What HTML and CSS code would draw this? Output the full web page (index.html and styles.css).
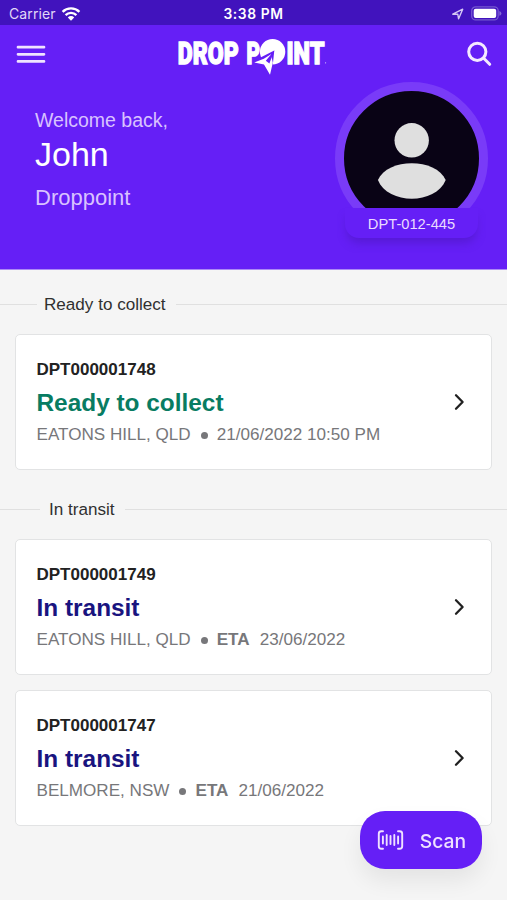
FILE: index.html
```html
<!DOCTYPE html>
<html lang="en">
<head>
<meta charset="utf-8">
<meta name="viewport" content="width=device-width, initial-scale=1">
<title>Drop Point</title>
<link rel="stylesheet" href="styles.css">
</head>
<body>
<div class="status">
  <div class="carrier"><span>Carrier</span>
    <svg width="20" height="16" viewBox="0 0 20 16"><g fill="none" stroke="#fff" stroke-width="2.4"><path d="M1.6 5.8a12 12 0 0 1 16.8 0M4.6 9.1a7.7 7.7 0 0 1 10.8 0"/></g><path fill="#fff" d="M6.8 11.4a4.6 4.6 0 0 1 6.4 0L10 14.7z"/></svg>
  </div>
  <span class="clock">3:38 PM</span>
  <div class="power">
    <svg width="12" height="12" viewBox="0 0 12 12"><path d="M.8 6.2 10.7 1.2 6.6 10.8 5.8 6.3z" fill="none" stroke="#d5c8f5" stroke-width="1.4" stroke-linejoin="round"/></svg>
    <svg width="31" height="15" viewBox="0 0 31 15"><rect x=".7" y=".9" width="26.5" height="13" rx="4" fill="none" stroke="#7558d0" stroke-width="1.3"/><rect x="2.7" y="2.8" width="22.5" height="9.2" rx="2" fill="#fff"/><path d="M28.4 5v4.8q2-.7 2-2.4T28.4 5" fill="#8367d8"/></svg>
  </div>
</div>
<header class="hero">
  <nav class="nav">
    <svg class="menu" width="30" height="20" viewBox="0 0 30 20"><path d="M2 2.2h26M2 9.3h26M2 16.4h26" stroke="#efe3ff" stroke-width="2.7" stroke-linecap="round"/></svg>
    <svg class="logo" width="150" height="56" viewBox="0 -12 150 56" role="img" aria-label="Drop Point">
      <g class="wordmark">
        <text x="0.8" y="24.5" textLength="61" lengthAdjust="spacingAndGlyphs">DROP</text>
        <text x="69.5" y="24.5" textLength="13.5" lengthAdjust="spacingAndGlyphs">P</text>
        <text x="109.5" y="24.5" textLength="38" lengthAdjust="spacingAndGlyphs">INT</text>
      </g>
      <circle cx="95.6" cy="12.8" r="12.7" fill="#fff"/>
      <path d="M97.3 11.5 82.5 19l-4 3 14.3 8 3-4.5z" fill="#651ff6"/>
      <path d="M94 15.2 86.8 19.8l-9.6 3.8 9.8 1.9 6 10.3 2.8-12.1z" fill="#fff"/>
      <path d="M97.3 11.5 88.8 21.8l3.6 2.6z" fill="#651ff6"/>
      <circle cx="148.6" cy="23.8" r=".6" fill="#d7c3ff"/>
    </svg>
    <svg width="28" height="28" viewBox="0 0 28 28"><g fill="none" stroke="#f4eaff" stroke-width="3" stroke-linecap="round"><circle cx="12.3" cy="11.8" r="8.6"/><path d="m18.7 18.3 6 6"/></g></svg>
  </nav>
  <div class="intro">
    <div class="greeting">
      <p class="welcome">Welcome back,</p>
      <p class="name">John</p>
      <p class="org">Droppoint</p>
    </div>
    <div class="profile">
      <div class="avatar">
        <svg width="135" height="134" viewBox="0 0 135 134"><circle cx="67.7" cy="49.3" r="17.2" fill="#dfdfdf"/><path d="M33.9 89C43.5 66.5 92 66.5 101.7 89 91.5 114 44 114 33.9 89z" fill="#dfdfdf"/></svg>
      </div>
      <span class="member">DPT-012-445</span>
    </div>
  </div>
</header>
<main>
  <h2 class="divider"><span>Ready to collect</span></h2>
  <article class="card">
    <div>
      <p class="id">DPT000001748</p>
      <p class="state ready">Ready to collect</p>
      <p class="meta"><span class="place">EATONS HILL, QLD</span><i class="dot"></i><span>21/06/2022 10:50 PM</span></p>
    </div>
    <svg width="12" height="18" viewBox="0 0 12 18"><path d="m3 2.3 6.6 6.7L3 15.7" class="chevron"/></svg>
  </article>
  <h2 class="divider transit-divider"><span>In transit</span></h2>
  <article class="card">
    <div>
      <p class="id">DPT000001749</p>
      <p class="state transit">In transit</p>
      <p class="meta"><span class="place">EATONS HILL, QLD</span><i class="dot"></i><b>ETA</b><span>23/06/2022</span></p>
    </div>
    <svg width="12" height="18" viewBox="0 0 12 18"><path d="m3 2.3 6.6 6.7L3 15.7" class="chevron"/></svg>
  </article>
  <article class="card">
    <div>
      <p class="id">DPT000001747</p>
      <p class="state transit">In transit</p>
      <p class="meta"><span class="place">BELMORE, NSW</span><i class="dot"></i><b>ETA</b><span>21/06/2022</span></p>
    </div>
    <svg width="12" height="18" viewBox="0 0 12 18"><path d="m3 2.3 6.6 6.7L3 15.7" class="chevron"/></svg>
  </article>
</main>
<button class="scan">
  <svg width="28" height="22" viewBox="0 0 28 22"><g fill="none" stroke="#efe1ff" stroke-width="1.9" stroke-linecap="round"><path d="M6 2.2H4.3Q1.8 2.2 1.8 4.7v12.6q0 2.5 2.5 2.5H6M21 2.2h1.7q2.5 0 2.5 2.5v12.6q0 2.5-2.5 2.5H21"/><path d="M5.9 7.5v7M9.7 6v10M13.5 7v8M17.3 6v10M21.1 7.5v7"/></g></svg>
  <span>Scan</span>
</button>
</body>
</html>
```
FILE: styles.css
```css
* { box-sizing: border-box; }
body {
  margin: 0;
  height: 900px;
  overflow: hidden;
  background: #f5f5f5;
  font-family: "Liberation Sans", Arial, sans-serif;
}
p, h2 { margin: 0; }
svg { display: block; flex: none; }
.status {
  height: 25px;
  padding: 2px 4px 0 9px;
  display: grid;
  grid-template-columns: 1fr auto 1fr;
  align-items: center;
  background: #4113bd;
  color: #fff;
  font: 14px/20px Inter, sans-serif;
}
.carrier { display: flex; align-items: center; gap: 5px; color: #e1d8f7; letter-spacing: .1px; }
.clock { font-weight: 600; font-size: 13.8px; letter-spacing: .6px; margin-left: -5px; }
.power { display: flex; justify-content: flex-end; align-items: center; gap: 7px; padding-right: 1px; }
.hero { height: 245px; background: #651ff6; border-bottom: 1px solid #ac8af5; }
.nav { height: 57px; padding: 0 14px 0 16px; display: flex; align-items: center; justify-content: space-between; }
.menu { margin-top: 2px; }
.logo { margin: 2px 0 0 -8px; overflow: visible; }
.wordmark { font: 900 31.5px Roboto, sans-serif; fill: #fff; stroke: #fff; stroke-width: 1.4px; }
.intro { display: flex; justify-content: space-between; padding: 0 19px 0 35px; }
.greeting { padding-top: 26px; }
.welcome { font-size: 19.5px; line-height: 24px; color: #d9c2ff; }
.name { font-size: 34px; line-height: 40px; margin-top: 2px; color: #fff; }
.org { font-size: 22px; line-height: 26px; margin-top: 11px; color: #d9c2ff; }
.profile { width: 153px; }
.avatar { width: 153px; height: 153px; border: 9px solid #793bf8; border-radius: 50%; background: #090315; }
.member {
  position: relative;
  display: block;
  width: 133px;
  height: 30px;
  margin: -27px auto 0;
  border-radius: 0 0 14px 14px;
  background: #651ff6;
  box-shadow: 0 7px 8px -2px #4e18c3a0;
  color: #eadbff;
  font-size: 14.7px;
  line-height: 33px;
  text-align: center;
}
.divider {
  display: flex;
  align-items: center;
  gap: 11px;
  height: 24px;
  margin-top: 22px;
  color: #303030;
  font-size: 17.1px;
  font-weight: 400;
}
.divider span { margin: 0 -4px 0 -4px; padding-top: 2px; }
.divider::before, .divider::after { content: ""; height: 1px; background: #e0e0e0; }
.divider::before { width: 37px; }
.divider::after { flex: 1; margin-left: 3px; }
.transit-divider { margin-top: 27px; }
.transit-divider::before { width: 40px; }
.transit-divider span { margin-left: -2px; }
.card {
  height: 136px;
  margin: 18px 15px 14px;
  padding: 23px 26px 0 20.5px;
  display: flex;
  justify-content: space-between;
  background: #fff;
  border: 1px solid #e2e3e4;
  border-radius: 5px;
}
.card > svg { margin-top: 35px; }
.card + .card { margin-top: 15px; }
.id { font-size: 17px; line-height: 24px; font-weight: 700; color: #222; }
.state { font-size: 24.4px; line-height: 30px; font-weight: 700; margin-top: 6px; }
.ready { color: #087c62; }
.transit { color: #19147f; }
.meta { display: flex; align-items: center; font-size: 17.1px; line-height: 24px; margin-top: 5px; color: #77777a; }
.meta b { margin-right: 10px; }
.dot { width: 7px; height: 7px; border-radius: 50%; background: #77777a; margin: 0 9px 0 10px; }
.chevron { fill: none; stroke: #202020; stroke-width: 2.3; stroke-linecap: round; stroke-linejoin: round; }
.scan {
  position: fixed;
  right: 25px;
  bottom: 31px;
  width: 122px;
  height: 58px;
  padding: 0 16px 0 17px;
  border: 0;
  border-radius: 25px;
  display: flex;
  align-items: center;
  justify-content: space-between;
  background: #651ff6;
  box-shadow: 0 12px 22px #00000012;
  color: #efe1ff;
  font: 500 19.3px Inter, sans-serif;
}
.scan span { padding-top: 2px; }
```
